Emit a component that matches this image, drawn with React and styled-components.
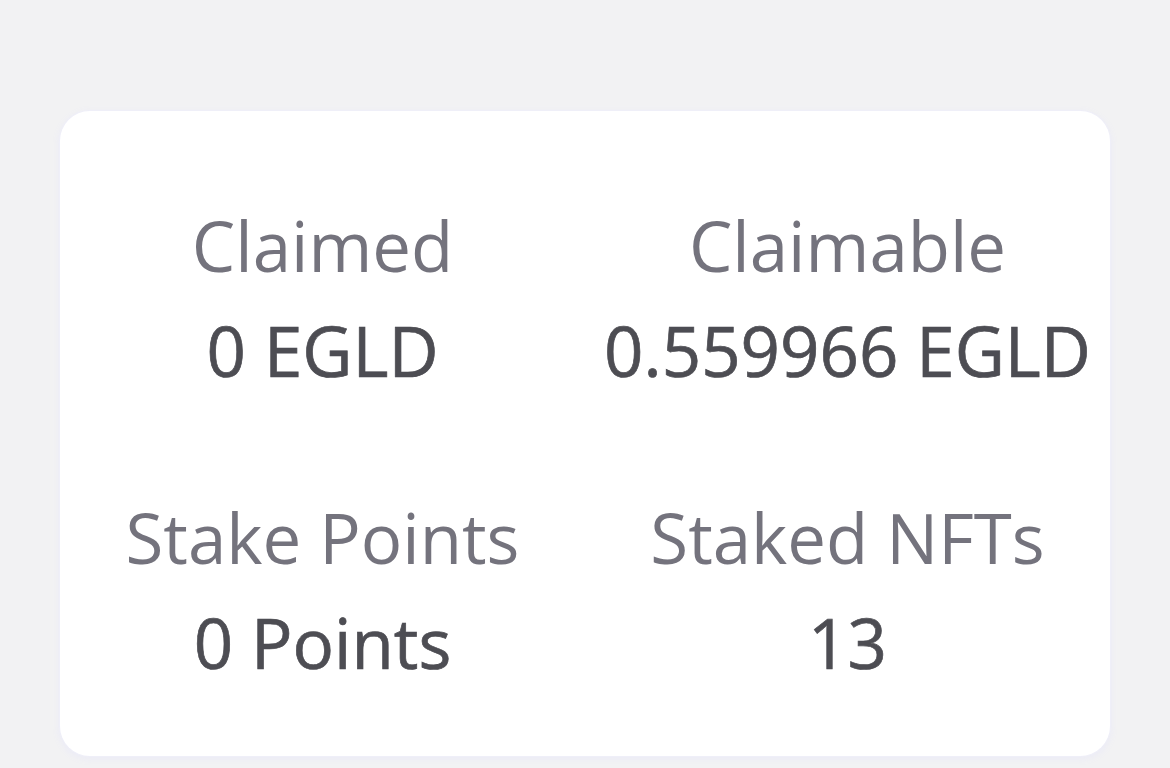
import React from "react";
import styled, { createGlobalStyle } from "styled-components";

const GlobalStyle = createGlobalStyle`
  html, body {
    margin: 0;
    padding: 0;
    background: #f2f2f3;
  }
  body {
    font-family: "Open Sans", "Noto Sans", sans-serif;
  }
`;

const Page = styled.div`
  width: 1170px;
  height: 768px;
  padding: 111px 60px 0;
  box-sizing: border-box;
`;

const Card = styled.div`
  background: #ffffff;
  border-radius: 30px;
  box-shadow: 0 0 0 1px #efeff8, 0 2px 6px 2px #ececf6;
  display: grid;
  grid-template-columns: 1fr 1fr;
  column-gap: 24px;
  row-gap: 82px;
  padding: 82px 12px 61px;
`;

const Stat = styled.div`
  display: flex;
  flex-direction: column;
  align-items: center;
  text-align: center;
  white-space: nowrap;
`;

const Label = styled.div`
  font-size: 69px;
  line-height: 105px;
  font-weight: 400;
  color: #74737d;
`;

const Value = styled.div`
  font-size: 69px;
  line-height: 105px;
  font-weight: 400;
  color: #4d4d53;
  -webkit-text-stroke: 0.7px #4d4d53;
`;

const stats = [
  { label: "Claimed", value: "0 EGLD" },
  { label: "Claimable", value: "0.559966 EGLD" },
  { label: "Stake Points", value: "0 Points" },
  { label: "Staked NFTs", value: "13" }
];

export default function App() {
  return (
    <Page>
      <GlobalStyle />
      <Card>
        {stats.map(s => (
          <Stat key={s.label}>
            <Label>{s.label}</Label>
            <Value>{s.value}</Value>
          </Stat>
        ))}
      </Card>
    </Page>
  );
}
